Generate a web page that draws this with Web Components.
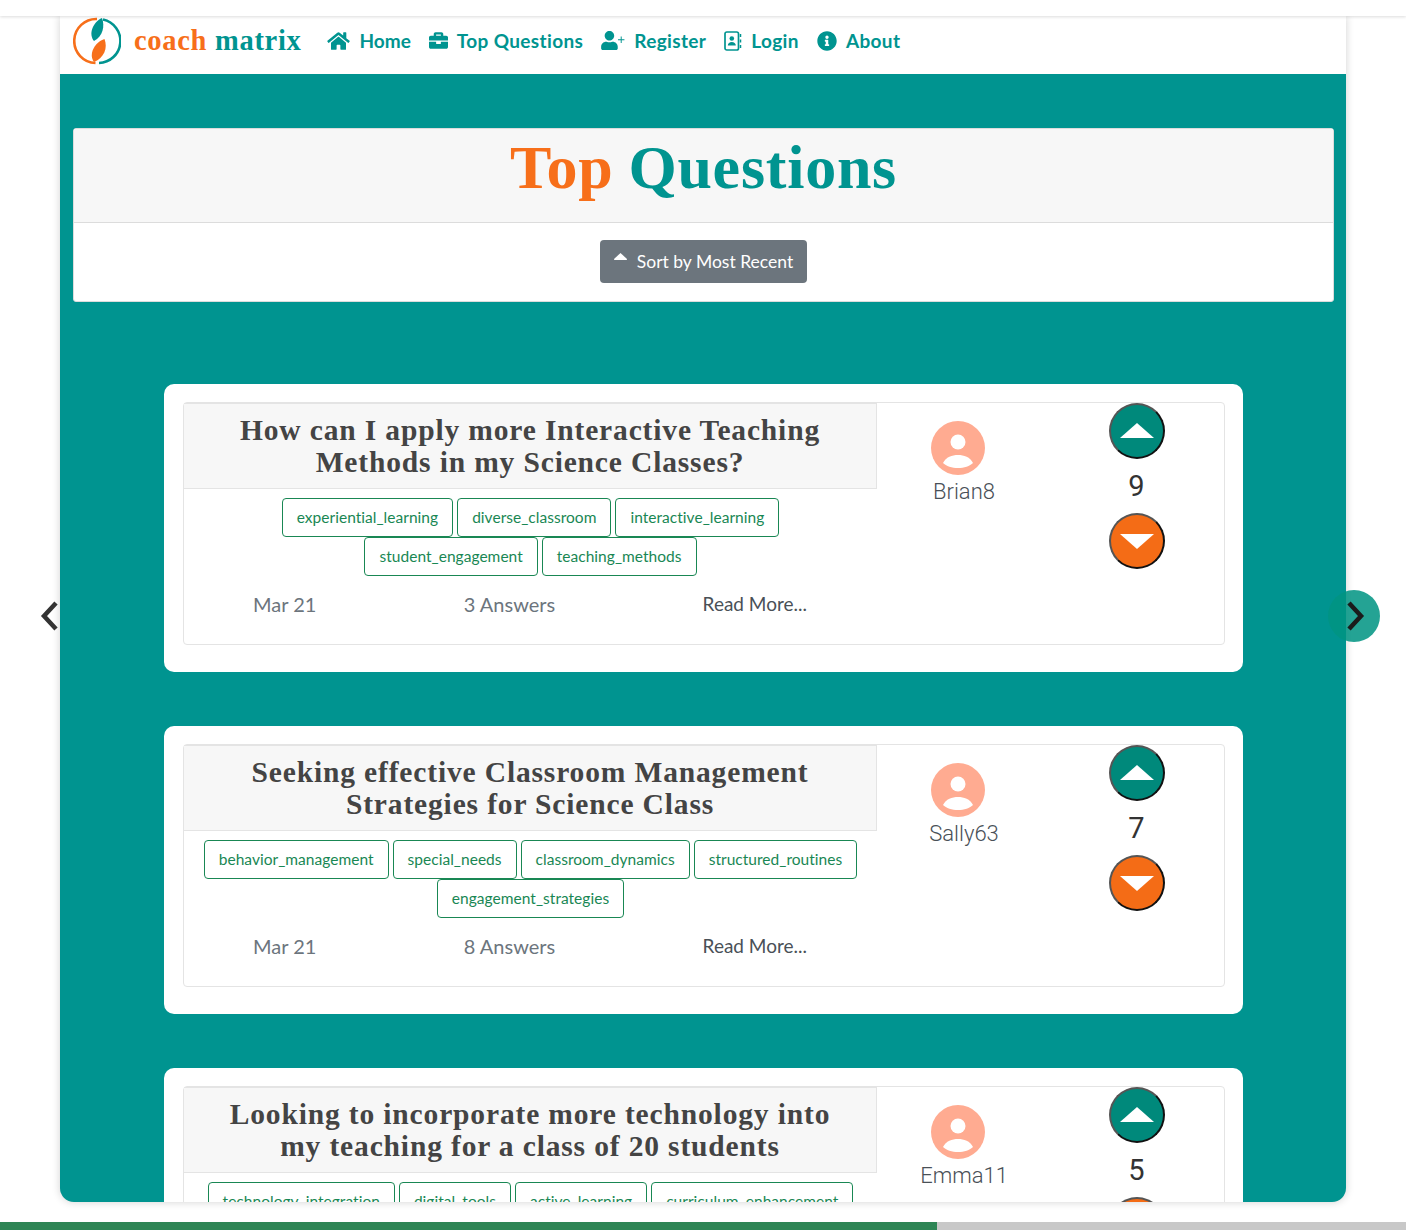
<!DOCTYPE html>
<html lang="en">
<head>
<meta charset="utf-8">
<title>coach matrix - Top Questions</title>
<style>
  html, body { margin: 0; height: 1230px; overflow: hidden; background: #fff; }
  body { font-family: Lato, "Liberation Sans", sans-serif; color: #495057; }
</style>
</head>
<body>
<app-shell>
  <app-nav>
    <nav-link label="Home" style="--ls: 0px"><svg slot="icon" width="23" height="20" viewBox="0 0 576 512"><path fill="currentColor" d="M280.37 148.26L96 300.11V464a16 16 0 0 0 16 16l112.06-.29a16 16 0 0 0 15.92-16V368a16 16 0 0 1 16-16h64a16 16 0 0 1 16 16v95.64a16 16 0 0 0 16 16.05L464 480a16 16 0 0 0 16-16V300L295.67 148.26a12.19 12.19 0 0 0-15.3 0zM571.6 251.47L488 182.56V44.05a12 12 0 0 0-12-12h-56a12 12 0 0 0-12 12v72.61L318.47 43a48 48 0 0 0-61 0L4.34 251.47a12 12 0 0 0-1.6 16.9l25.5 31A12 12 0 0 0 45.15 301l235.22-193.74a12.19 12.19 0 0 1 15.3 0L530.9 301a12 12 0 0 0 16.9-1.6l25.5-31a12 12 0 0 0-1.7-16.93z"/></svg></nav-link>
    <nav-link label="Top Questions"><svg slot="icon" width="19" height="19" viewBox="0 0 512 512"><path fill="currentColor" d="M320 336c0 8.84-7.16 16-16 16h-96c-8.84 0-16-7.16-16-16v-48H0v144c0 25.6 22.4 48 48 48h416c25.6 0 48-22.4 48-48V288H320v48zm144-208h-80V80c0-25.6-22.4-48-48-48H176c-25.6 0-48 22.4-48 48v48H48c-25.6 0-48 22.4-48 48v80h512v-80c0-25.6-22.4-48-48-48zm-144 0H192V96h128v32z"/></svg></nav-link>
    <nav-link label="Register"><svg slot="icon" width="24" height="19" viewBox="0 0 640 512"><path fill="currentColor" d="M224 256c70.7 0 128-57.3 128-128S294.7 0 224 0 96 57.3 96 128s57.3 128 128 128zm89.6 32h-16.7c-22.2 10.200-46.900 16-72.900 16s-50.600-5.800-72.900-16h-16.700C60.200 288 0 348.200 0 422.400V464c0 26.500 21.500 48 48 48h352c26.500 0 48-21.500 48-48v-41.600c0-74.200-60.200-134.400-134.400-134.400zM528 150h26v74h74v26h-74v74h-26v-74h-74v-26h74z"/></svg></nav-link>
    <nav-link label="Login"><svg slot="icon" width="18" height="20" viewBox="0 0 18 20"><rect x="1" y="1" width="13.500" height="18" rx="1.800" fill="none" stroke="currentColor" stroke-width="1.700"/><circle cx="7.800" cy="7.500" r="2.300" fill="currentColor"/><path fill="currentColor" d="M3.800 14.500c0-2.200 1.800-3.400 4-3.400s4 1.200 4 3.400z"/><path stroke="currentColor" stroke-width="1.500" d="M16.500 3v3M16.500 8.500v3M16.500 14v3"/></svg></nav-link>
    <nav-link label="About"><svg slot="icon" width="20" height="20" viewBox="0 0 512 512"><path fill="currentColor" d="M256 8C119.043 8 8 119.083 8 256c0 136.997 111.043 248 248 248s248-111.003 248-248C504 119.083 392.957 8 256 8zm0 110c23.196 0 42 18.804 42 42s-18.804 42-42 42-42-18.804-42-42 18.804-42 42-42zm56 254c0 6.627-5.373 12-12 12h-88c-6.627 0-12-5.373-12-12v-24c0-6.627 5.373-12 12-12h12v-64h-12c-6.627 0-12-5.373-12-12v-24c0-6.627 5.373-12 12-12h64c6.627 0 12 5.373 12 12v100h12c6.627 0 12 5.373 12 12v24z"/></svg></nav-link>
  </app-nav>
  <page-heading>
    <sort-button>Sort by Most Recent</sort-button>
  </page-heading>
  <question-card heading="How can I apply more Interactive Teaching Methods in my Science Classes?" user="Brian8" votes="9" date="Mar 21" answers="3 Answers">
    <tag-chip>experiential_learning</tag-chip><tag-chip>diverse_classroom</tag-chip><tag-chip>interactive_learning</tag-chip><tag-chip>student_engagement</tag-chip><tag-chip>teaching_methods</tag-chip>
  </question-card>
  <question-card heading="Seeking effective Classroom Management Strategies for Science Class" user="Sally63" votes="7" date="Mar 21" answers="8 Answers">
    <tag-chip>behavior_management</tag-chip><tag-chip>special_needs</tag-chip><tag-chip>classroom_dynamics</tag-chip><tag-chip>structured_routines</tag-chip><tag-chip>engagement_strategies</tag-chip>
  </question-card>
  <!-- third card runs past the bottom of the frame, its footer is never seen -->
  <question-card heading="Looking to incorporate more technology into my teaching for a class of 20 students" user="Emma11" votes="5">
    <tag-chip>technology_integration</tag-chip><tag-chip>digital_tools</tag-chip><tag-chip>active_learning</tag-chip><tag-chip>curriculum_enhancement</tag-chip>
  </question-card>
</app-shell>

<script>
// shared look of the body font
const BODY_FONT = 'Lato, "Liberation Sans", sans-serif';
const SERIF_FONT = '"Liberation Serif", serif';

class AppShell extends HTMLElement {
  constructor() {
    super();
    this.attachShadow({ mode: 'open' });
    this.shadowRoot.innerHTML = `
      <style>
        :host { display: flex; flex-direction: column; height: 1230px; position: relative; overflow: hidden; }
        .top { height: 16px; flex: none; background: #fff; box-shadow: 0 1px 3px rgba(0,0,0,.14); position: relative; z-index: 2; }
        .frame {
          height: 1186px; flex: none; margin: 0 60px; overflow: hidden; background: #009490;
          border-radius: 0 0 14px 14px; box-shadow: 0 0 8px rgba(0,0,0,.18);
        }
        .gap { height: 20px; flex: none; }
        .progress { height: 8px; flex: none; background: #c8c8c8; }
        .progress div { width: 937px; height: 100%; background: #2e8555; }
        .arrow { position: absolute; top: 590px; width: 52px; height: 52px; display: flex; align-items: center; justify-content: center; border-radius: 50%; }
        .prev { left: 24px; }
        .next { left: 1328px; background: rgba(0,148,130,.86); }
        .next svg { margin-left: 2px; }
      </style>
      <div class="top"></div>
      <div class="frame"><slot></slot></div>
      <div class="gap"></div>
      <div class="progress"><div></div></div>
      <div class="arrow prev"><svg width="20" height="32" viewBox="0 0 20 32"><path d="M16 3L4 16l12 13" fill="none" stroke="#333" stroke-width="4.500" stroke-linejoin="miter"/></svg></div>
      <div class="arrow next"><svg width="20" height="32" viewBox="0 0 20 32"><path d="M4 3l12 13L4 29" fill="none" stroke="#1b1b1b" stroke-width="4.500" stroke-linejoin="miter"/></svg></div>
    `;
  }
}
customElements.define('app-shell', AppShell);

class AppNav extends HTMLElement {
  constructor() {
    super();
    this.attachShadow({ mode: 'open' });
    this.shadowRoot.innerHTML = `
      <style>
        :host { display: flex; align-items: center; height: 58px; box-sizing: border-box; background: #fff; padding: 0 0 9px 13px; }
        svg.logo { flex: none; margin-right: 13px; margin-top: 1px; }
        .brand { font: bold 28.500px/1 ${SERIF_FONT}; letter-spacing: .7px; white-space: nowrap; margin-right: 26px; margin-top: 1px; }
        .brand b:first-child { color: #f76f1a; }
        .brand b:last-child { color: #009490; }
        nav { display: flex; gap: 18px; align-items: center; }
      </style>
      <svg class="logo" width="48" height="50" viewBox="0 0 48 50">
        <path d="M24 3A22 22 0 0 0 22.500 47" fill="none" stroke="#f76f1a" stroke-width="2.600"/>
        <path d="M30 3.500A22 22 0 0 1 26 47" fill="none" stroke="#009490" stroke-width="2.600"/>
        <path fill="#009490" d="M29 2C20 6 15 18 21 25C30 20 32 10 29 2z"/>
        <path fill="#f76f1a" d="M31.500 23C22 26 15 38 21 46C31 42 35 32 31.500 23z"/>
      </svg>
      <div class="brand"><b>coach</b> <b>matrix</b></div>
      <nav><slot></slot></nav>
    `;
  }
}
customElements.define('app-nav', AppNav);

class NavLink extends HTMLElement {
  constructor() {
    super();
    this.attachShadow({ mode: 'open' });
    this.shadowRoot.innerHTML = `
      <style>
        :host { display: flex; align-items: center; gap: 9px; color: #009490; cursor: pointer; }
        span { font: bold 19px/1 ${BODY_FONT}; letter-spacing: var(--ls, .36px); white-space: nowrap; }
        ::slotted(svg) { display: block; flex: none; }
      </style>
      <slot name="icon"></slot><span></span>
    `;
  }
  connectedCallback() {
    this.shadowRoot.querySelector('span').textContent = this.getAttribute('label');
  }
}
customElements.define('nav-link', NavLink);

class PageHeading extends HTMLElement {
  constructor() {
    super();
    this.attachShadow({ mode: 'open' });
    this.shadowRoot.innerHTML = `
      <style>
        :host { display: block; margin: 54px 12px 82px 13px; background: #fff; border: 1px solid #dcdcdc; border-radius: 3px; }
        h1 {
          margin: 0; height: 94px; box-sizing: border-box; padding-bottom: 17px; display: flex; justify-content: center; align-items: center; gap: 15px;
          background: #f7f7f7; border-bottom: 1px solid #dcdcdc;
          font: bold 62px/1 ${SERIF_FONT}; letter-spacing: .75px;
        }
        h1 span:first-child { color: #f76f1a; }
        h1 span:last-child { color: #009490; }
        .body { display: flex; justify-content: center; padding: 17px 0 18px; }
      </style>
      <h1><span>Top</span><span>Questions</span></h1>
      <div class="body"><slot></slot></div>
    `;
  }
}
customElements.define('page-heading', PageHeading);

class SortButton extends HTMLElement {
  constructor() {
    super();
    this.attachShadow({ mode: 'open' });
    this.shadowRoot.innerHTML = `
      <style>
        :host {
          display: flex; align-items: center; gap: 10px; height: 43px; padding: 0 14px;
          background: #6c757d; color: #fff; border-radius: 4px; font: 17.500px/1 ${BODY_FONT}; white-space: nowrap;
        }
        svg { display: block; margin-top: -10px; }
      </style>
      <svg width="13" height="7" viewBox="0 0 13 7"><path d="M6.500 0L13 6a1 1 0 0 1-.5 1H.5A1 1 0 0 1 0 6z" fill="#fff"/></svg>
      <span><slot></slot></span>
    `;
  }
}
customElements.define('sort-button', SortButton);

class TagChip extends HTMLElement {
  constructor() {
    super();
    this.attachShadow({ mode: 'open' });
    this.shadowRoot.innerHTML = `
      <style>
        :host {
          display: flex; align-items: center; height: 39px; box-sizing: border-box; padding: 0 14px;
          border: 1px solid #198754; border-radius: 4px; color: #198754; font: 15.500px/1 ${BODY_FONT}; letter-spacing: .03px; white-space: nowrap;
        }
      </style>
      <slot></slot>
    `;
  }
}
customElements.define('tag-chip', TagChip);

class VoteButton extends HTMLElement {
  constructor() {
    super();
    this.attachShadow({ mode: 'open' });
    this.shadowRoot.innerHTML = `
      <style>
        :host {
          display: flex; align-items: center; justify-content: center; width: 56px; height: 56px; box-sizing: border-box;
          border-radius: 50%; background: #00897b; border: 2px solid #111; border-left-color: #555; border-top-color: #555;
        }
        :host([dir-down]) { background: #f46c16; }
      </style>
      <svg width="34" height="16" viewBox="0 0 34 16"><path fill="#fff" d=""/></svg>
    `;
  }
  connectedCallback() {
    const down = this.hasAttribute('dir-down');
    this.shadowRoot.querySelector('path').setAttribute('d', down ? 'M0 1h34L17 16z' : 'M17 0l17 15H0z');
  }
}
customElements.define('vote-button', VoteButton);

class QuestionCard extends HTMLElement {
  constructor() {
    super();
    this.attachShadow({ mode: 'open' });
    this.shadowRoot.innerHTML = `
      <style>
        :host { display: block; margin: 0 103px 54px 104px; padding: 18px 18px 27px 19px; flex: none; background: #fff; border-radius: 10px; }
        .inner { display: grid; grid-template-columns: 693px 174px 1fr; height: 243px; box-sizing: border-box; border: 1px solid #e4e4e4; border-radius: 4px; }
        .main { min-width: 0; }
        h2 {
          margin: 0; height: 86px; box-sizing: border-box; display: flex; align-items: center; justify-content: center; text-align: center;
          padding: 0 40px; background: #f7f7f7; border: 1px solid #e4e4e4; border-width: 1px 1px 1px 0;
          font: bold 29.500px/32.500px ${SERIF_FONT}; letter-spacing: .85px; color: #444;
        }
        .tags { display: flex; flex-wrap: wrap; justify-content: center; gap: 0 4px; padding: 9px 14px 0; height: 79px; align-content: flex-start; }
        .meta { display: flex; justify-content: space-between; padding: 15px 70px 0 69px; font-size: 20px; line-height: 24px; color: #6c757d; }
        .meta .more { color: #495057; font-size: 19px; }
        .user { display: flex; flex-direction: column; align-items: center; padding-top: 18px; font: 300 22px/26px Roboto, sans-serif; color: #495057; }
        .user svg { display: block; margin-left: -12px; margin-bottom: 4px; }
        .votes { display: flex; flex-direction: column; align-items: center; padding-right: 2px; }
        .count { font: 400 29px/54px Roboto, sans-serif; color: #333; height: 54px; }
      </style>
      <div class="inner">
        <div class="main">
          <h2></h2>
          <div class="tags"><slot></slot></div>
          <div class="meta"><span class="date"></span><span class="answers"></span><span class="more">Read More...</span></div>
        </div>
        <div class="user">
          <svg width="54" height="54" viewBox="0 0 54 54"><circle cx="27" cy="27" r="27" fill="#ffab91"/><circle cx="27" cy="21" r="7.500" fill="#fff"/><path fill="#fff" d="M12 42c3-6 9-8 15-8s12 2 15 8c-3 3-9 5-15 5s-12-2-15-5z"/></svg>
          <span class="name"></span>
        </div>
        <div class="votes">
          <vote-button></vote-button>
          <div class="count"></div>
          <vote-button dir-down></vote-button>
        </div>
      </div>
    `;
  }
  connectedCallback() {
    const root = this.shadowRoot;
    root.querySelector('h2').textContent = this.getAttribute('heading');
    root.querySelector('.name').textContent = this.getAttribute('user');
    root.querySelector('.count').textContent = this.getAttribute('votes');
    if (!this.hasAttribute('date')) {
      root.querySelector('.meta').remove();
      return;
    }
    root.querySelector('.date').textContent = this.getAttribute('date');
    root.querySelector('.answers').textContent = this.getAttribute('answers');
  }
}
customElements.define('question-card', QuestionCard);
</script>
</body>
</html>
